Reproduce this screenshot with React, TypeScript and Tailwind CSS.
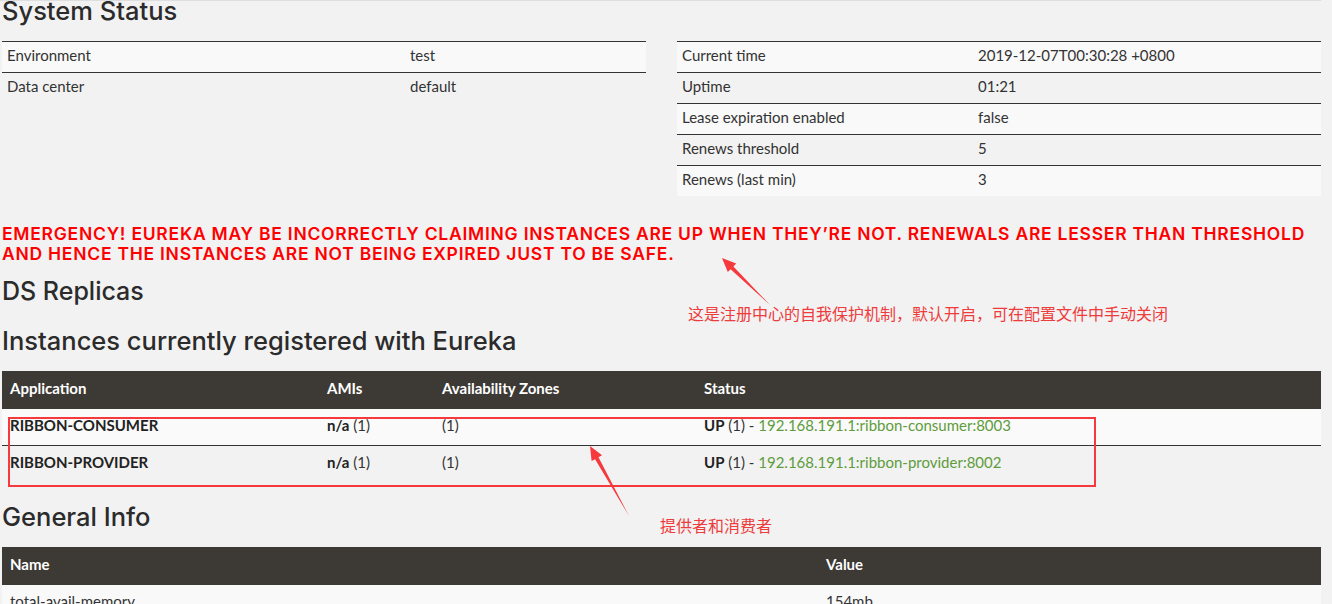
import React from "react";

const leftRows = [
  ["Environment", "test"],
  ["Data center", "default"],
];

const rightRows = [
  ["Current time", "2019-12-07T00:30:28 +0800"],
  ["Uptime", "01:21"],
  ["Lease expiration enabled", "false"],
  ["Renews threshold", "5"],
  ["Renews (last min)", "3"],
];

const instances = [
  { app: "RIBBON-CONSUMER", link: "192.168.191.1:ribbon-consumer:8003" },
  { app: "RIBBON-PROVIDER", link: "192.168.191.1:ribbon-provider:8002" },
];

function InfoTable({ rows, labelWidth }: { rows: string[][]; labelWidth: string }) {
  return (
    <div className="flex flex-col">
      {rows.map(([label, value], i) => (
        <div
          key={label}
          className={`flex h-[31px] items-center border-t border-[#333] pb-[3px] text-[15px] ${
            i % 2 === 0 ? "bg-[#f9f9f9]" : "bg-transparent"
          }`}
        >
          <div className={`${labelWidth} shrink-0 pl-[5px]`}>{label}</div>
          <div>{value}</div>
        </div>
      ))}
    </div>
  );
}

export default function App() {
  return (
    <div className="relative h-[604px] w-[1332px] overflow-hidden bg-[#f2f2f2] font-['Lato',sans-serif] text-[#333]">
      <div className="w-[1321px] border-t border-[#dedede] pl-[2px]">
        <h2 className="-mt-[2px] font-['Inter',sans-serif] text-[25.5px] font-medium leading-[24px] text-[#2b2b2b]">
          System Status
        </h2>

        {/* status tables */}
        <div className="mt-[18px] grid grid-cols-[644px_644px] items-start gap-x-[31px]">
          <InfoTable rows={leftRows} labelWidth="w-[408px]" />
          <InfoTable rows={rightRows} labelWidth="w-[301px]" />
        </div>

        {/* emergency warning */}
        <p className="mt-[28px] whitespace-nowrap font-['Inter',sans-serif] text-[17.5px] font-semibold leading-[20px] tracking-[0.75px] text-[#ff0000]">
          EMERGENCY! EUREKA MAY BE INCORRECTLY CLAIMING INSTANCES ARE UP WHEN THEY’RE NOT. RENEWALS ARE LESSER THAN THRESHOLD
          <br />
          AND HENCE THE INSTANCES ARE NOT BEING EXPIRED JUST TO BE SAFE.
        </p>

        <h2 className="mt-[14px] font-['Inter',sans-serif] text-[25px] font-medium leading-[26px] text-[#2b2b2b]">
          DS Replicas
        </h2>
        <h2 className="mt-[23px] font-['Inter',sans-serif] text-[25.5px] font-medium leading-[28px] text-[#2b2b2b]">
          Instances currently registered with Eureka
        </h2>

        {/* instances */}
        <div className="mt-[16px]">
          <div className="flex h-[38px] items-center bg-[#3d3934] pb-[3px] text-[15px] font-bold text-white">
            <div className="w-[325px] shrink-0 pl-[8px]">Application</div>
            <div className="w-[115px] shrink-0">AMIs</div>
            <div className="w-[262px] shrink-0">Availability Zones</div>
            <div>Status</div>
          </div>
          {instances.map((row, i) => (
            <div
              key={row.app}
              className={`flex items-center pb-[3px] text-[15px] ${
                i === 0 ? "h-[36px] bg-[#fafafa]" : "h-[37px] border-t border-[#333] bg-transparent"
              }`}
            >
              <div className="w-[325px] shrink-0 pl-[8px] font-bold text-[#222]">{row.app}</div>
              <div className="w-[115px] shrink-0">
                <b className="text-[#222]">n/a</b> (1)
              </div>
              <div className="w-[262px] shrink-0">(1)</div>
              <div>
                <b className="text-[#222]">UP</b> (1) - <span className="text-[#5e9c3c]">{row.link}</span>
              </div>
            </div>
          ))}
        </div>

        <h2 className="mt-[21px] font-['Inter',sans-serif] text-[25.5px] font-medium leading-[28px] text-[#2b2b2b]">
          General Info
        </h2>
        <div className="mt-[16px]">
          <div className="flex h-[38px] items-center bg-[#3d3934] pb-[3px] text-[15px] font-bold text-white">
            <div className="w-[824px] shrink-0 pl-[8px]">Name</div>
            <div>Value</div>
          </div>
          <div className="flex h-[36px] items-center bg-[#f9f9f9] pb-[3px] text-[15px]">
            <div className="w-[824px] shrink-0 pl-[8px]">total-avail-memory</div>
            <div>154mb</div>
          </div>
        </div>
      </div>

      {/* annotations */}
      <div className="absolute left-[8px] top-[417px] h-[70px] w-[1088px] border-[2.5px] border-[#f5393c]" />
      <div className="absolute left-[688px] top-[302px] whitespace-nowrap font-['Noto_Sans_CJK_SC',sans-serif] text-[16px] leading-[22px] text-[#ee3b3b]">
        这是注册中心的自我保护机制，默认开启，可在配置文件中手动关闭
      </div>
      <div className="absolute left-[660px] top-[514px] whitespace-nowrap font-['Noto_Sans_CJK_SC',sans-serif] text-[16px] leading-[22px] text-[#ee3b3b]">
        提供者和消费者
      </div>
      <svg className="pointer-events-none absolute left-0 top-0" width="1332" height="604">
        <polygon
          fill="#f5393c"
          points="770,305 733.4,266.4 736.2,263.5 722,258 727.8,272.1 730.6,269.2"
        />
        <polygon
          fill="#f5393c"
          points="629,516 598.5,457.2 602,455.3 590,446 591.6,461.1 595.1,459.2"
        />
      </svg>
    </div>
  );
}
